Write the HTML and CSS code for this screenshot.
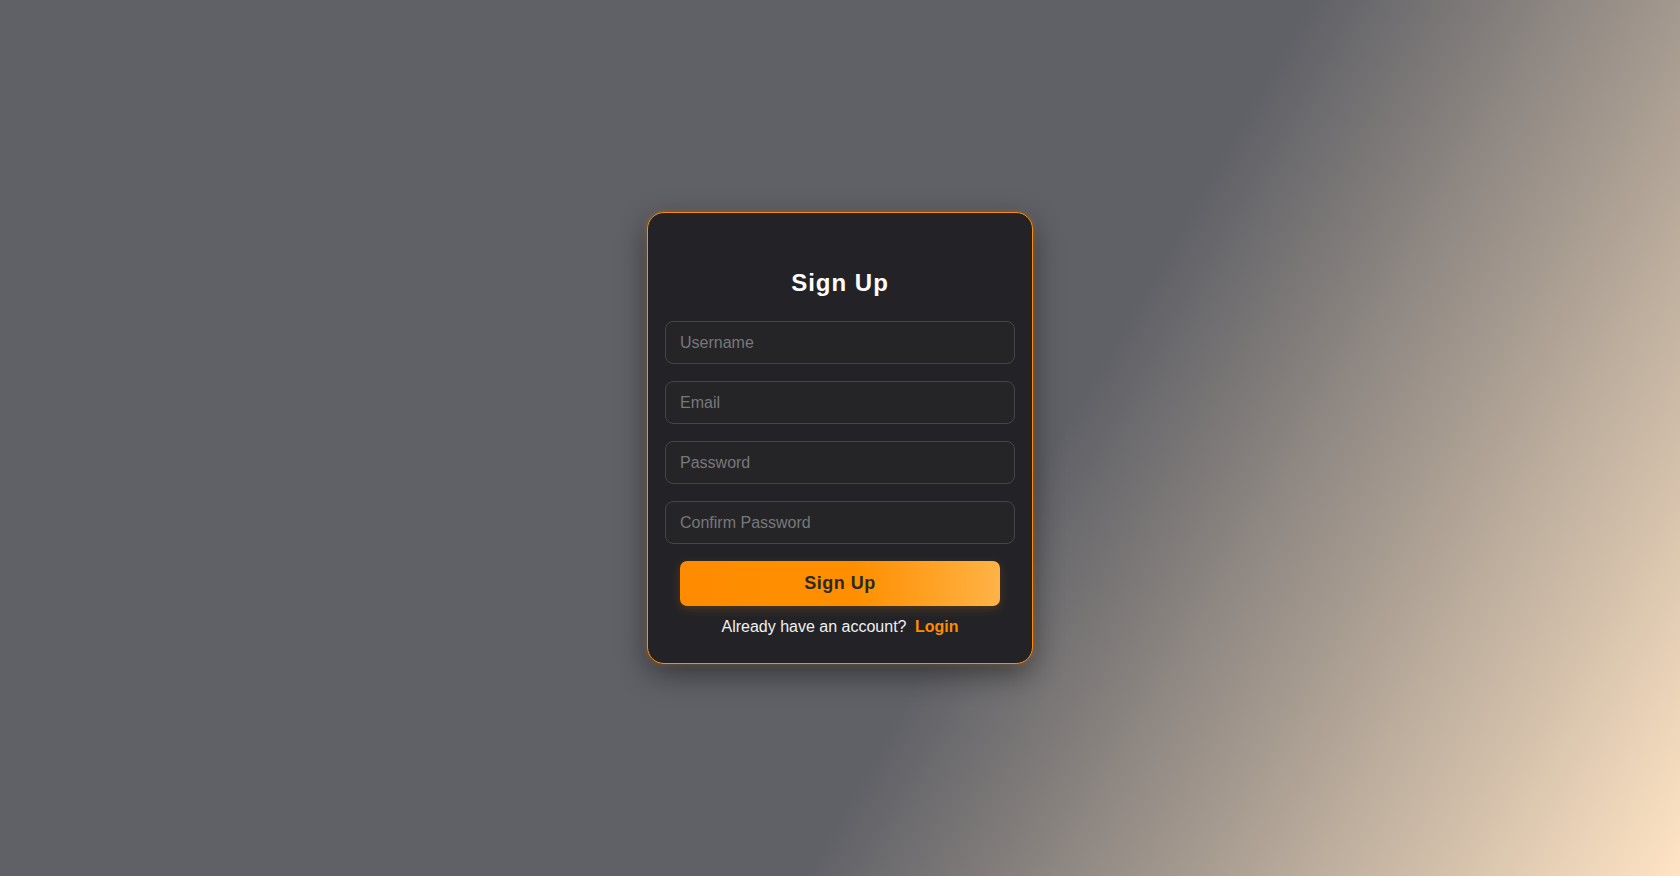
FILE: index.html
```html
<!DOCTYPE html>
<html lang="en">
<head>
<meta charset="utf-8">
<title>Sign Up</title>
<link rel="stylesheet" href="styles.css">
</head>
<body>
  <main class="page">
    <form class="card">
      <h2 class="title">Sign Up</h2>
      <input class="field" type="text" placeholder="Username">
      <input class="field" type="email" placeholder="Email">
      <input class="field" type="password" placeholder="Password">
      <input class="field" type="password" placeholder="Confirm Password">
      <button class="btn" type="button">Sign Up</button>
      <p class="switch">Already have an account? <a class="link" href="#">Login</a></p>
    </form>
  </main>
</body>
</html>
```

FILE: styles.css
```css
* { box-sizing: border-box; }

html, body {
  margin: 0;
  padding: 0;
  height: 100%;
}

body {
  font-family: "Liberation Sans", Arial, sans-serif;
  background: linear-gradient(120deg, #606167 0%, #606167 60%, #ffe4c4 100%);
}

.page {
  height: 876px;
  display: flex;
  align-items: center;
  justify-content: center;
}

.card {
  width: 386px;
  height: 452px;
  background: #232327;
  border: 1px solid #ff8c00;
  border-radius: 17px;
  padding: 0 17px;
  display: flex;
  flex-direction: column;
  box-shadow: 0 0 6px rgba(255, 140, 0, 0.25), 0 10px 30px rgba(0, 0, 0, 0.45);
}

.title {
  margin: 56px 0 24px;
  font-size: 24px;
  line-height: 28px;
  font-weight: 700;
  letter-spacing: 1px;
  color: #ffffff;
  text-align: center;
}

.field {
  display: block;
  width: 100%;
  height: 43px;
  margin: 0 0 17px;
  padding: 0 14px;
  background: #252528;
  border: 1px solid #454549;
  border-radius: 8px;
  color: #eeeeee;
  font-family: "Liberation Sans", Arial, sans-serif;
  font-size: 16px;
  outline: none;
}

.field::placeholder {
  color: #78787a;
}

.btn {
  display: block;
  width: 320px;
  height: 45px;
  margin: 0 auto;
  border: none;
  border-radius: 7px;
  background: linear-gradient(90deg, #ff8c00 0%, #ff8f00 55%, #ffb347 100%);
  color: #2a2a2a;
  font-family: "Liberation Sans", Arial, sans-serif;
  font-size: 18px;
  font-weight: 700;
  letter-spacing: 0.5px;
  box-shadow: 0 3px 10px rgba(255, 140, 0, 0.2);
  cursor: pointer;
}

.switch {
  margin: 12px 0 0;
  font-size: 16px;
  line-height: 18px;
  color: #f0f0f0;
  text-align: center;
}

.link {
  margin-left: 4px;
  color: #ff8c00;
  font-weight: 700;
  text-decoration: none;
}
```
